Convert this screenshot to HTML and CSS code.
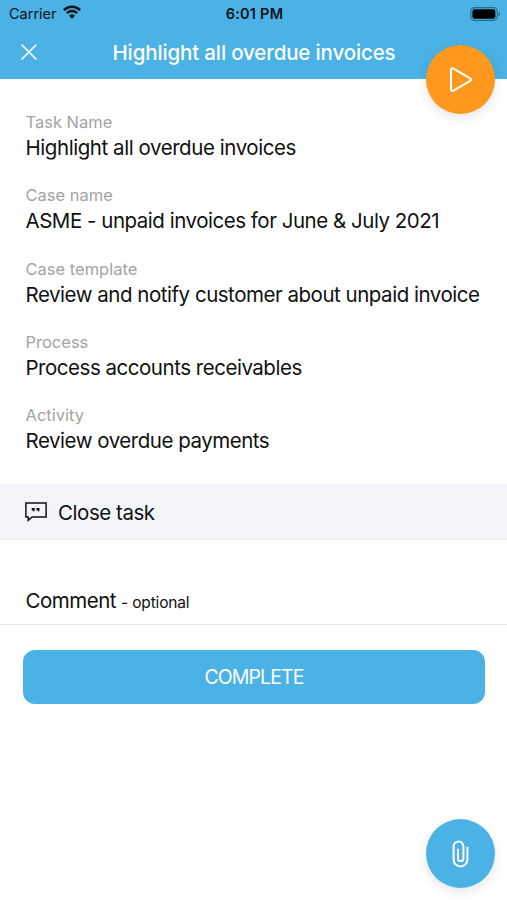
FILE: index.html
```html
<!DOCTYPE html>
<html lang="en">
<head>
<meta charset="utf-8">
<title>Highlight all overdue invoices</title>
<link rel="stylesheet" href="styles.css">
</head>
<body>
<div class="screen">
  <header class="header">
    <div class="status">
      <div class="carrier"><span>Carrier</span>
        <svg class="wifi" width="18" height="14" viewBox="0 0 18 14"><g fill="none" stroke="#0b1418" stroke-width="2.5"><path d="M.9 5.1a11.5 11.5 0 0 1 16.2 0"/><path d="M3.9 8.2a7.2 7.2 0 0 1 10.2 0"/></g><path d="M9 13.8 6 10.7a4.3 4.3 0 0 1 6 0z" fill="#0b1418"/></svg>
      </div>
      <span class="time">6:01 PM</span>
      <svg class="battery" width="31" height="14" viewBox="0 0 31 14"><rect x=".7" y=".7" width="26.6" height="12.6" rx="4" fill="none" stroke="#2c6a88" stroke-width="1.2"/><rect x="2.4" y="2.3" width="23" height="9.4" rx="2.2" fill="#000"/><path d="M28.6 4.8c2 .8 2 3.6 0 4.4z" fill="#2c6a88"/></svg>
    </div>
    <div class="titlebar">
      <svg class="close" width="16" height="16" viewBox="0 0 16 16"><path d="M1 1l14 14M15 1 1 15" stroke="#fff" stroke-width="1.6" stroke-linecap="round"/></svg>
      <h1>Highlight all overdue invoices</h1>
    </div>
    <button class="fab play" aria-label="Start"><svg width="24" height="26" viewBox="0 0 24 26"><path d="M2 2.6v20c0 1.2 1 1.8 2 1.2l17.2-10c1.1-.6 1.1-1.9 0-2.5L4 1.4C3 .8 2 1.4 2 2.6z" fill="none" stroke="#fff" stroke-width="2"/></svg></button>
  </header>
  <dl class="details">
    <div class="field"><dt>Task Name</dt><dd class="short">Highlight all overdue invoices</dd></div>
    <div class="field"><dt>Case name</dt><dd>ASME - unpaid invoices for June &amp; July 2021</dd></div>
    <div class="field"><dt>Case template</dt><dd>Review and notify customer about unpaid invoice</dd></div>
    <div class="field"><dt>Process</dt><dd>Process accounts receivables</dd></div>
    <div class="field"><dt>Activity</dt><dd>Review overdue payments</dd></div>
  </dl>
  <div class="section">
    <svg width="22" height="20" viewBox="0 0 22 20"><path d="M.9.9h20.2v14H7.2L3.2 18.3v-3.4H.9z" fill="none" stroke="#111" stroke-width="1.5"/><path d="M6.7 6h3v2.5L8.5 10.2V8.6H6.7zM11.5 6h3v2.5l-1.2 1.7V8.6h-1.8z" fill="#111"/></svg>
    <span>Close task</span>
  </div>
  <div class="comment"><span class="comment-label">Comment</span><span class="optional">- optional</span></div>
  <button class="complete"><span>COMPLETE</span></button>
  <button class="fab attach" aria-label="Attach"><svg width="17" height="28" viewBox="0 0 17 28"><path d="M6 8.8v9.6a2.7 2.7 0 0 0 5.4 0V6.5a4.9 4.9 0 0 0-9.8 0v13a6.9 6.9 0 0 0 13.8 0V6.7" fill="none" stroke="#fff" stroke-width="2"/></svg></button>
</div>
</body>
</html>
```
FILE: styles.css
```css
* { box-sizing: border-box; }
body { margin: 0; font-family: Inter, "Liberation Sans", sans-serif; color: #111; background: #fff; }
svg { display: block; flex: none; }
button { border: 0; padding: 0; font: inherit; color: #fff; }
.screen { position: relative; width: 507px; height: 900px; overflow: hidden; }
.header { position: relative; height: 79px; background: #4ab2e5; }
.status { display: grid; grid-template-columns: 1fr auto 1fr; align-items: center; height: 27px; padding: 0 6px 0 8px; color: #0b1418; font-size: 14.5px; }
.carrier { display: flex; align-items: center; gap: 6px; padding-left: 1px; }
.wifi { margin-top: -3px; }
.time { font-weight: 600; font-size: 14.5px; letter-spacing: .25px; }
.battery { justify-self: end; }
.titlebar { display: grid; grid-template-columns: 40px 1fr 40px; align-items: center; height: 50px; padding: 0 20px 0 21px; }
h1 { margin: 0; font-size: 20.5px; font-weight: 500; color: #fff; text-align: center; white-space: nowrap; letter-spacing: -.14px; }
.fab { position: absolute; left: 426px; width: 69px; height: 69px; border-radius: 50%; display: flex; align-items: center; justify-content: center; }
.play { top: 45px; background: #ff981f; box-shadow: 0 4px 12px rgba(0,0,0,.1); }
.attach { top: 819px; background: #4ab2e5; box-shadow: 0 4px 12px rgba(0,0,0,.1); }
.details { margin: 0; height: 405px; padding: 32px 0 0 25.5px; }
.field { height: 73.25px; }
dt { font-size: 16.5px; line-height: 22px; color: #a3a3a3; }
dd { margin: 0; padding-top: 1px; font-size: 20.5px; line-height: 28px; white-space: nowrap; letter-spacing: -.475px; }
.short { letter-spacing: -.44px; }
.section { display: flex; align-items: center; gap: 11px; height: 56px; padding: 0 25px; background: #f3f5fa; border-bottom: 1px solid #ededf0; font-size: 20.5px; letter-spacing: -.45px; }
.section span { padding-top: 2px; }
.comment { display: flex; align-items: baseline; gap: 5px; height: 85px; padding: 46.5px 25.5px 0; border-bottom: 1px solid #e6e6e6; }
.comment-label { font-size: 20.5px; line-height: 28px; letter-spacing: -.5px; }
.optional { font-size: 15.5px; letter-spacing: -.15px; }
.complete { display: flex; align-items: center; justify-content: center; width: 462px; height: 54px; margin: 25px 0 0 23px; border-radius: 12px; background: #4ab2e5; font-size: 19.5px; letter-spacing: -.9px; }
```
